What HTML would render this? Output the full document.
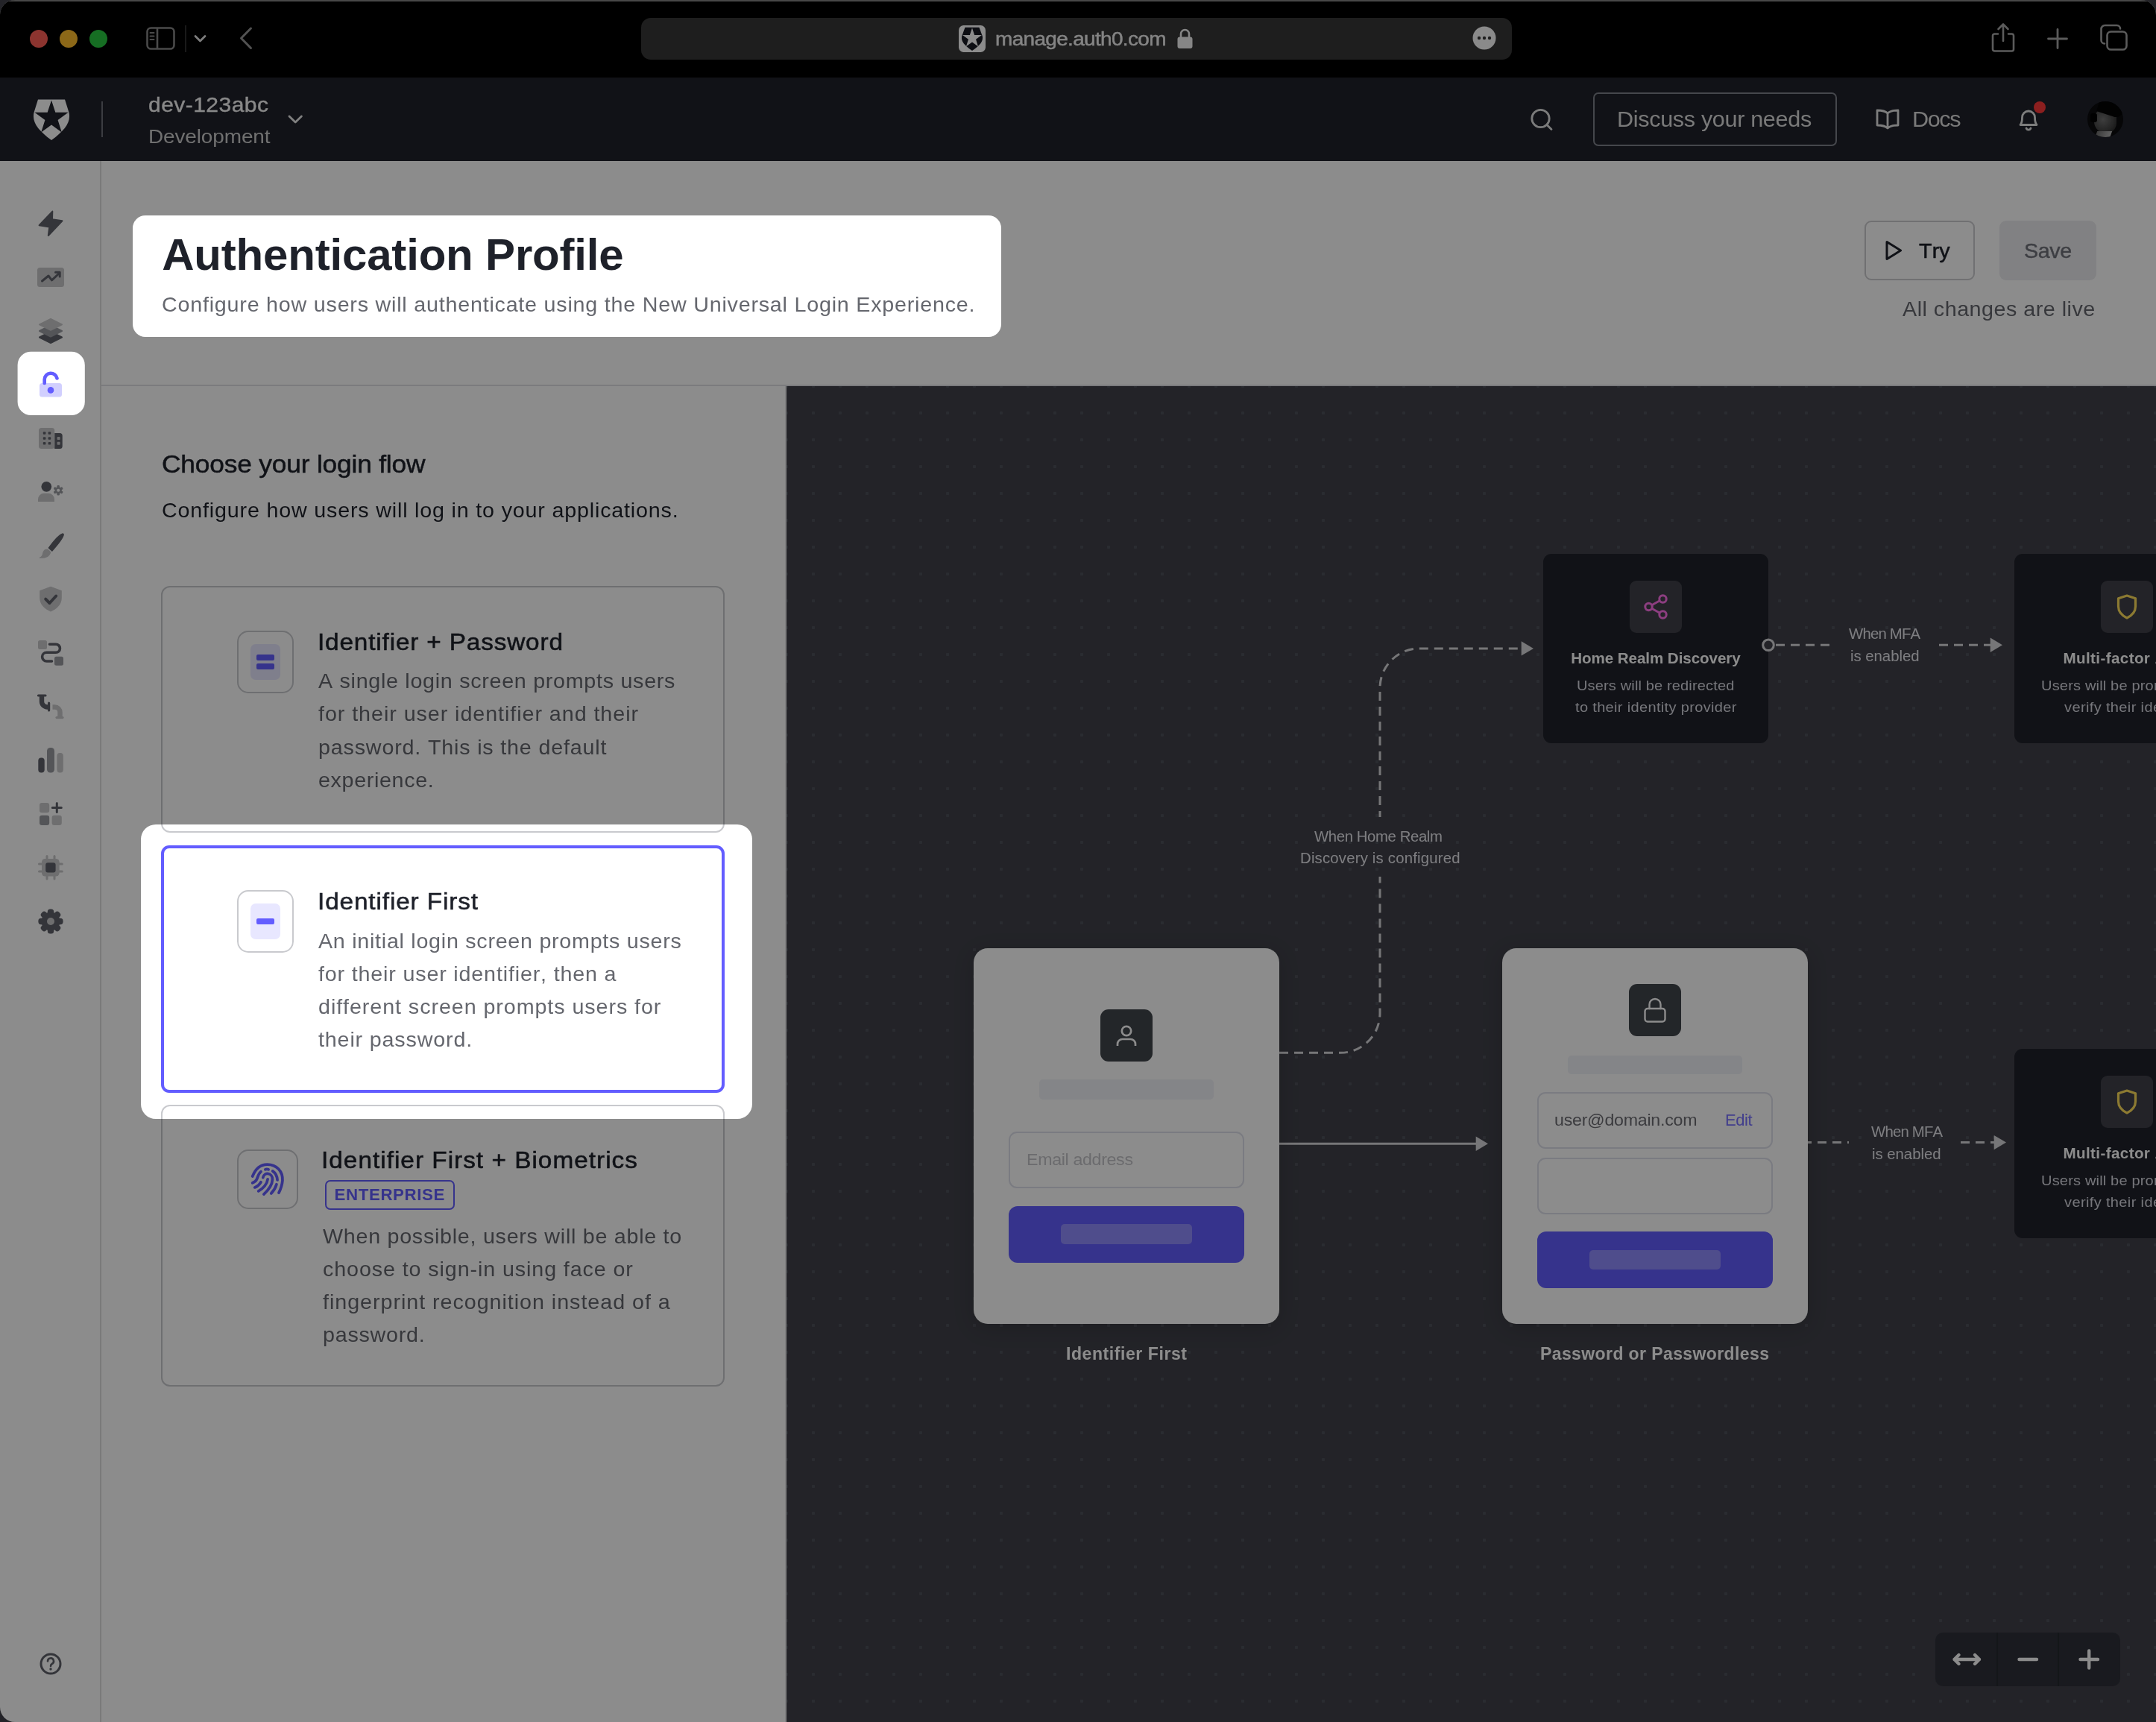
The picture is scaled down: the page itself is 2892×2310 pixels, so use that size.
<!DOCTYPE html>
<html><head><meta charset="utf-8"><title>Authentication Profile</title>
<style>
html,body{margin:0;padding:0}
body{width:2892px;height:2310px;position:relative;overflow:hidden;background:#404149;font-family:"Liberation Sans",sans-serif;font-kerning:none;-webkit-font-smoothing:antialiased}
#win{position:absolute;left:0;top:0;width:2892px;height:2310px;border-radius:20px 20px 0 20px;overflow:hidden;background:#fff;will-change:transform}
</style></head><body>
<div id="win">
<div style="position:absolute;left:0px;top:0px;width:2892px;height:104px;box-sizing:border-box;background:#000;"></div>
<div style="position:absolute;left:0px;top:0px;width:2892px;height:2px;box-sizing:border-box;background:#919191;opacity:.9;"></div>
<div style="position:absolute;left:40px;top:40px;width:24px;height:24px;box-sizing:border-box;background:#ff5f57;border-radius:12px;"></div>
<div style="position:absolute;left:80px;top:40px;width:24px;height:24px;box-sizing:border-box;background:#ffbd2d;border-radius:12px;"></div>
<div style="position:absolute;left:120px;top:40px;width:24px;height:24px;box-sizing:border-box;background:#28c840;border-radius:12px;"></div>
<svg style="position:absolute;left:194px;top:34px;" width="44" height="36" viewBox="0 0 44 36"><rect x="3.5" y="3.5" width="36" height="28" rx="5" fill="none" stroke="#878787" stroke-width="2.6"/><line x1="17" y1="3.5" x2="17" y2="31.5" stroke="#878787" stroke-width="2.6"/><g stroke="#878787" stroke-width="2" stroke-linecap="round"><line x1="7.5" y1="10" x2="12.5" y2="10"/><line x1="7.5" y1="14.5" x2="12.5" y2="14.5"/><line x1="7.5" y1="19" x2="12.5" y2="19"/></g></svg>
<div style="position:absolute;left:248px;top:34px;width:2px;height:36px;box-sizing:border-box;background:#2f2f2f;"></div>
<svg style="position:absolute;left:258px;top:44px;" width="22" height="16" viewBox="0 0 22 16"><polyline points="4,4.5 10.5,11 17,4.5" fill="none" stroke="#e3e3e3" stroke-width="2.8" stroke-linecap="round" stroke-linejoin="round"/></svg>
<svg style="position:absolute;left:316px;top:32px;" width="28" height="38" viewBox="0 0 28 38"><polyline points="20.5,6 7.5,19.3 20.5,32.5" fill="none" stroke="#959595" stroke-width="3" stroke-linecap="round" stroke-linejoin="round"/></svg>
<div style="position:absolute;left:860px;top:24px;width:1168px;height:56px;box-sizing:border-box;background:#383838;border-radius:13px;"></div>
<svg style="position:absolute;left:1286px;top:34px;" width="36" height="36" viewBox="0 0 36 36"><rect x="0" y="0" width="36" height="36" rx="6.500" fill="#ffffff"/><path d="M8.500 2.800 h19 l4.200 11.500 c1.800 7 -3.500 13 -13.700 19.700 c-10.200 -6.700 -15.500 -12.700 -13.700 -19.700 z" fill="#191b24"/><polygon points="18.00,3.60 21.12,12.91 30.93,13.00 23.04,18.84 25.99,28.20 18.00,22.50 10.01,28.20 12.96,18.84 5.07,13.00 14.88,12.91" fill="#ffffff"/></svg>
<div style="position:absolute;left:1335.00px;top:38.87px;font-size:26.5px;line-height:26.5px;color:#f0f0f0;white-space:pre;letter-spacing:-0.623px;transform:scaleX(1.055);transform-origin:0 0;-webkit-text-stroke:0.45px #f0f0f0;">manage.auth0.com</div>
<svg style="position:absolute;left:1577px;top:36px;" width="26" height="32" viewBox="0 0 26 32"><rect x="2.5" y="13.5" width="20" height="15.5" rx="3" fill="#f5f5f5"/><path d="M7 14 v-4.5 a5.5 5.5 0 0 1 11 0 v4.5" fill="none" stroke="#f5f5f5" stroke-width="2.6"/></svg>
<svg style="position:absolute;left:1975px;top:35px;" width="32" height="32" viewBox="0 0 32 32"><circle cx="16" cy="16" r="15.5" fill="#fbfbfb"/><circle cx="9" cy="16" r="2.2" fill="#383838"/><circle cx="16" cy="16" r="2.2" fill="#383838"/><circle cx="23" cy="16" r="2.2" fill="#383838"/></svg>
<svg style="position:absolute;left:2668px;top:27.5px;" width="38" height="44" viewBox="0 0 38 44"><path d="M12 17.5 h-4.5 a2.5 2.5 0 0 0 -2.5 2.5 v18 a2.5 2.5 0 0 0 2.5 2.5 h23 a2.5 2.5 0 0 0 2.5 -2.5 v-18 a2.5 2.5 0 0 0 -2.5 -2.5 h-4.500" fill="none" stroke="#a7a7a7" stroke-width="2.6" stroke-linecap="round"/><path d="M19 27 v-22 M12.500 11 l6.500 -6.500 l6.500 6.500" fill="none" stroke="#a7a7a7" stroke-width="2.6" stroke-linecap="round" stroke-linejoin="round"/></svg>
<svg style="position:absolute;left:2744px;top:36px;" width="32" height="32" viewBox="0 0 32 32"><path d="M16 3.5 v25 M3.5 16 h25" stroke="#a7a7a7" stroke-width="2.8" stroke-linecap="round"/></svg>
<svg style="position:absolute;left:2816px;top:31px;" width="40" height="38" viewBox="0 0 40 38"><rect x="10.500" y="11.500" width="26" height="24" rx="5" fill="none" stroke="#a7a7a7" stroke-width="2.6"/><path d="M7 27.500 a4.500 4.500 0 0 1 -4.500 -4.500 v-15 a5 5 0 0 1 5 -5 h16 a4.500 4.500 0 0 1 4.500 4.500" fill="none" stroke="#a7a7a7" stroke-width="2.6" stroke-linecap="round"/></svg>
<div style="position:absolute;left:0px;top:104px;width:2892px;height:112px;box-sizing:border-box;background:#1f212a;"></div>
<svg style="position:absolute;left:44px;top:133px;" width="50" height="56" viewBox="0 0 50 56"><path d="M7 0.500 h36 l5.500 17.500 c3 13 -6 24 -23.500 37 c-17.500 -13 -26.500 -24 -23.500 -37 z" fill="#ffffff"/><path d="M25 1.500 l5.300 16.300 h17.300 l-14 10.300 l5.200 16.300 l-13.800 -10 l-13.800 10 l5.200 -16.300 l-14 -10.300 h17.300 z" fill="#1f212a"/></svg>
<div style="position:absolute;left:136px;top:136px;width:2px;height:48px;box-sizing:border-box;background:#6d6f78;"></div>
<div style="position:absolute;left:198.70px;top:125.87px;font-size:28.5px;line-height:28.5px;color:#f7f7f7;white-space:pre;letter-spacing:0.407px;transform:scaleX(1.055);transform-origin:0 0;-webkit-text-stroke:0.35px #f7f7f7;">dev-123abc</div>
<div style="position:absolute;left:198.70px;top:169.87px;font-size:26.5px;line-height:26.5px;color:#cccccc;white-space:pre;letter-spacing:-0.117px;transform:scaleX(1.055);transform-origin:0 0;">Development</div>
<svg style="position:absolute;left:384px;top:150px;" width="26" height="20" viewBox="0 0 26 20"><polyline points="4,6 12.200,14 20.400,6" fill="none" stroke="#e9e9e9" stroke-width="2.8" stroke-linecap="round" stroke-linejoin="round"/></svg>
<svg style="position:absolute;left:2050px;top:143px;" width="36" height="36" viewBox="0 0 36 36"><circle cx="16.500" cy="16" r="11.700" fill="none" stroke="#e1e1e1" stroke-width="2.800"/><line x1="25" y1="24.500" x2="31" y2="30.500" stroke="#e1e1e1" stroke-width="2.800" stroke-linecap="round"/></svg>
<div style="position:absolute;left:2137px;top:124px;width:327px;height:72px;box-sizing:border-box;border-radius:7px;border:2px solid #7f818a;"></div>
<div style="position:absolute;left:2169.20px;top:146.05px;font-size:29px;line-height:29px;color:#dcdcdc;white-space:pre;letter-spacing:-0.322px;transform:scaleX(1.055);transform-origin:0 0;">Discuss your needs</div>
<svg style="position:absolute;left:2514px;top:144px;" width="36" height="32" viewBox="0 0 36 32"><path d="M18 8 c-3 -3 -8 -4 -14 -4 v20 c6 0 11 1 14 4 c3 -3 8 -4 14 -4 v-20 c-6 0 -11 1 -14 4 z M18 8 v20" fill="none" stroke="#e3e3e3" stroke-width="2.8" stroke-linejoin="round"/></svg>
<div style="position:absolute;left:2565.00px;top:146.05px;font-size:29px;line-height:29px;color:#dcdcdc;white-space:pre;letter-spacing:-1.297px;transform:scaleX(1.055);transform-origin:0 0;">Docs</div>
<svg style="position:absolute;left:2702px;top:142px;" width="38" height="36" viewBox="0 0 38 36"><path d="M8 25.500 c2.500 -3 2.500 -6 2.500 -10 a8.500 8.500 0 0 1 17 0 c0 4 0 7 2.500 10 z" fill="none" stroke="#e3e3e3" stroke-width="2.800" stroke-linejoin="round"/><path d="M16 30 a3.200 3.200 0 0 0 6 0" fill="none" stroke="#e3e3e3" stroke-width="2.800" stroke-linecap="round"/></svg>
<div style="position:absolute;left:2728px;top:136px;width:16px;height:16px;box-sizing:border-box;background:#ff3a3a;border-radius:8px;"></div>
<div style="position:absolute;left:2800px;top:136px;width:48px;height:48px;border-radius:24px;overflow:hidden;background:#0b0b0d"><div style="position:absolute;left:9px;top:9px;width:30px;height:34px;border-radius:15px 12px 14px 16px;background:radial-gradient(ellipse at 40% 45%,#717171 0%,#454545 55%,#191919 100%)"></div><div style="position:absolute;left:15px;top:-5px;width:34px;height:24px;border-radius:8px 20px 14px 2px;background:#040405;transform:rotate(18deg)"></div><div style="position:absolute;left:4px;top:16px;width:9px;height:12px;border-radius:3px;background:#000000"></div><div style="position:absolute;left:11px;top:40px;width:20px;height:12px;background:linear-gradient(90deg,#6d6d6d,#b2b2b2);transform:skewX(-20deg)"></div></div>
<div style="position:absolute;left:134px;top:216px;width:2px;height:2094px;box-sizing:border-box;background:#dedede;"></div>
<svg style="position:absolute;left:44px;top:276px;" width="48" height="48" viewBox="44 276 48 48"><path d="M70.300 283.600 L52.600 302.300 L66.300 304.600 L64.800 316 L83.500 296.300 L70 294.200 Z" fill="#60626b" stroke="#60626b" stroke-width="2" stroke-linejoin="round"/></svg>
<svg style="position:absolute;left:44px;top:348px;" width="48" height="48" viewBox="44 348 48 48"><rect x="50" y="359" width="36" height="26" rx="3.500" fill="#c8c8ca"/><polyline points="56.500,377 65,370 69.500,375.800 79,367" fill="none" stroke="#60626b" stroke-width="3" stroke-linecap="round" stroke-linejoin="round"/><polyline points="74.500,365.300 80.200,365.300 80.200,371" fill="none" stroke="#60626b" stroke-width="3" stroke-linecap="round" stroke-linejoin="round"/></svg>
<svg style="position:absolute;left:44px;top:420px;" width="48" height="48" viewBox="44 420 48 48"><path d="M68 445 L83 452.5 L68 460 L53 452.5 Z" fill="#60626b" stroke="#60626b" stroke-width="2" stroke-linejoin="round"/><path d="M68 436.5 L83 444 L68 451.5 L53 444 Z" fill="#999ba0" stroke="#999ba0" stroke-width="2" stroke-linejoin="round"/><path d="M68 427.8 L83 435.3 L68 442.8 L53 435.3 Z" fill="#c8c8ca" stroke="#c8c8ca" stroke-width="2" stroke-linejoin="round"/></svg>
<svg style="position:absolute;left:44px;top:492px;" width="48" height="48" viewBox="44 492 48 48"><rect x="53" y="514" width="30" height="18.600" rx="3.500" fill="#d1cffe"/><circle cx="68" cy="523.400" r="4.300" fill="#635dff"/><path d="M59.700 514 v-5 a8.500 8.500 0 0 1 16.800 -1.600" fill="none" stroke="#635dff" stroke-width="4.600" stroke-linecap="round"/></svg>
<svg style="position:absolute;left:44px;top:564px;" width="48" height="48" viewBox="44 564 48 48"><path d="M73.200 581 h7 a3.500 3.500 0 0 1 3.500 3.500 v14 a3.500 3.500 0 0 1 -3.500 3.500 h-7 z" fill="#60626b"/><rect x="52" y="574" width="21.200" height="28" rx="3.500" fill="#c8c8ca"/><rect x="57.8" y="579.2" width="3.600" height="3.600" rx="1" fill="#60626b"/><rect x="57.8" y="586.2" width="3.600" height="3.600" rx="1" fill="#60626b"/><rect x="57.8" y="593" width="3.600" height="3.600" rx="1" fill="#60626b"/><rect x="64.6" y="579.2" width="3.600" height="3.600" rx="1" fill="#60626b"/><rect x="64.6" y="586.2" width="3.600" height="3.600" rx="1" fill="#60626b"/><rect x="64.6" y="593" width="3.600" height="3.600" rx="1" fill="#60626b"/><rect x="76.6" y="586" width="4" height="4" rx="1" fill="#c8c8ca"/><rect x="76.6" y="592.8" width="4" height="4" rx="1" fill="#c8c8ca"/></svg>
<svg style="position:absolute;left:44px;top:636px;" width="48" height="48" viewBox="44 636 48 48"><circle cx="62.300" cy="652.800" r="6.900" fill="#60626b"/><path d="M51 673 v-3 a8 8 0 0 1 8 -8.200 h6 a8 8 0 0 1 8 8.200 v3 z" fill="#c8c8ca"/><rect x="-1.700" y="-6.700" width="3.400" height="13.400" rx="1.200" transform="translate(78.200 657.800) rotate(0)" fill="#999ba0"/><rect x="-1.700" y="-6.700" width="3.400" height="13.400" rx="1.200" transform="translate(78.200 657.800) rotate(60)" fill="#999ba0"/><rect x="-1.700" y="-6.700" width="3.400" height="13.400" rx="1.200" transform="translate(78.200 657.800) rotate(120)" fill="#999ba0"/><circle cx="78.200" cy="657.800" r="4.600" fill="#999ba0"/><circle cx="78.200" cy="657.800" r="2" fill="#ffffff"/></svg>
<svg style="position:absolute;left:44px;top:708px;" width="48" height="48" viewBox="44 708 48 48"><path d="M84.300 716 C80 717 72 726 65.500 735 L69.800 739 C77 731 84.500 722 85.200 717 Z" fill="#60626b" stroke="#60626b" stroke-width="1.500" stroke-linejoin="round"/><path d="M64 736.500 C59 736 57.500 740 57 743 C56.500 746 54 747.500 52 748.300 C58 750 67 748 68.300 740.500 Z" fill="#c8c8ca"/></svg>
<svg style="position:absolute;left:44px;top:780px;" width="48" height="48" viewBox="44 780 48 48"><path d="M68 786.800 L82.800 792.300 V802 C82.800 811 76 817 68 820.500 C60 817 53.200 811 53.200 802 V792.300 Z" fill="#c8c8ca"/><polyline points="61.200,803.700 66.500,809 75.200,799.500" fill="none" stroke="#60626b" stroke-width="4" stroke-linecap="round" stroke-linejoin="round"/></svg>
<svg style="position:absolute;left:44px;top:852px;" width="48" height="48" viewBox="44 852 48 48"><rect x="51" y="859" width="12" height="12" rx="2.500" fill="#c8c8ca"/><rect x="73" y="880.800" width="12" height="12" rx="2.500" fill="#999ba0"/><path d="M66.500 864.300 H75 a5.450 5.450 0 0 1 0 10.900 H62.500 a5.900 5.900 0 0 0 0 11.800 H69.500" fill="none" stroke="#60626b" stroke-width="3.600" stroke-linecap="round"/></svg>
<svg style="position:absolute;left:44px;top:924px;" width="48" height="48" viewBox="44 924 48 48"><path d="M56 933.500 v7.500 a7.500 7.500 0 0 0 7.500 7.500 h2" fill="none" stroke="#60626b" stroke-width="6.400"/><path d="M51.500 933 h9.500 M65.600 943 v10" stroke="#60626b" stroke-width="3.200" stroke-linecap="round"/><path d="M70.500 948.500 h3 a7 7 0 0 1 7 7 v6.500" fill="none" stroke="#c8c8ca" stroke-width="6.400"/><path d="M76 962.600 h8" stroke="#c8c8ca" stroke-width="3.200" stroke-linecap="round"/></svg>
<svg style="position:absolute;left:44px;top:996px;" width="48" height="48" viewBox="44 996 48 48"><rect x="51.300" y="1016.600" width="8.400" height="20" rx="4" fill="#60626b"/><rect x="63" y="1003" width="10" height="33.600" rx="4.500" fill="#999ba0"/><rect x="76.400" y="1010" width="8.400" height="26.600" rx="4" fill="#c8c8ca"/></svg>
<svg style="position:absolute;left:44px;top:1068px;" width="48" height="48" viewBox="44 1068 48 48"><rect x="53" y="1077" width="13.200" height="13.200" rx="3.200" fill="#c8c8ca"/><rect x="53" y="1093.800" width="13.200" height="13.200" rx="3.200" fill="#999ba0"/><rect x="69.600" y="1093.800" width="13.200" height="13.200" rx="3.200" fill="#c8c8ca"/><path d="M76.300 1077.600 v12 M70.300 1083.600 h12" stroke="#60626b" stroke-width="3" stroke-linecap="round"/></svg>
<svg style="position:absolute;left:44px;top:1140px;" width="48" height="48" viewBox="44 1140 48 48"><path d="M63 1148.500 v30.500" stroke="#c8c8ca" stroke-width="3" stroke-linecap="round"/><path d="M73 1148.500 v30.500" stroke="#c8c8ca" stroke-width="3" stroke-linecap="round"/><path d="M52.500 1159 h30.800" stroke="#c8c8ca" stroke-width="3" stroke-linecap="round"/><path d="M52.500 1169 h30.800" stroke="#c8c8ca" stroke-width="3" stroke-linecap="round"/><rect x="56" y="1152" width="23.600" height="23.600" rx="4.500" fill="#c8c8ca"/><rect x="61.200" y="1157.200" width="13.400" height="13.400" rx="3" fill="#60626b"/></svg>
<svg style="position:absolute;left:44px;top:1212px;" width="48" height="48" viewBox="44 1212 48 48"><rect x="-4.200" y="-16.600" width="8.400" height="33.200" rx="3.600" transform="translate(68 1236) rotate(0)" fill="#60626b"/><rect x="-4.200" y="-16.600" width="8.400" height="33.200" rx="3.600" transform="translate(68 1236) rotate(45)" fill="#60626b"/><rect x="-4.200" y="-16.600" width="8.400" height="33.200" rx="3.600" transform="translate(68 1236) rotate(90)" fill="#60626b"/><rect x="-4.200" y="-16.600" width="8.400" height="33.200" rx="3.600" transform="translate(68 1236) rotate(135)" fill="#60626b"/><circle cx="68" cy="1236" r="12.500" fill="#60626b"/><circle cx="68" cy="1236" r="5" fill="#c8c8ca"/></svg>
<svg style="position:absolute;left:44px;top:2208px;" width="48" height="48" viewBox="44 2208 48 48"><circle cx="68" cy="2232" r="13" fill="none" stroke="#60626b" stroke-width="3"/><path d="M64 2228.500 a4 4 0 1 1 5.800 3.500 c-1.300 0.700 -1.800 1.500 -1.800 3" fill="none" stroke="#60626b" stroke-width="2.600" stroke-linecap="round"/><circle cx="68" cy="2239" r="1.700" fill="#60626b"/></svg>
<div style="position:absolute;left:136px;top:516px;width:2756px;height:2px;box-sizing:border-box;background:#e1e1e5;"></div>
<div style="position:absolute;left:217.20px;top:311.51px;font-size:60px;line-height:60px;color:#1e212a;white-space:pre;font-weight:700;letter-spacing:-0.184px;">Authentication Profile</div>
<div style="position:absolute;left:216.70px;top:394.68px;font-size:27.2px;line-height:27.2px;color:#65676e;white-space:pre;letter-spacing:0.736px;transform:scaleX(1.055);transform-origin:0 0;">Configure how users will authenticate using the New Universal Login Experience.</div>
<div style="position:absolute;left:2501px;top:296px;width:148px;height:80px;box-sizing:border-box;border-radius:9px;border:2px solid #cccccf;"></div>
<svg style="position:absolute;left:2524px;top:318px;" width="34" height="36" viewBox="0 0 34 36"><path d="M7 6.500 L25.500 18 L7 29.500 Z" fill="none" stroke="#1e212a" stroke-width="3" stroke-linejoin="round"/></svg>
<div style="position:absolute;left:2573.90px;top:322.98px;font-size:27.2px;line-height:27.2px;color:#1e212a;white-space:pre;letter-spacing:0.126px;transform:scaleX(1.055);transform-origin:0 0;-webkit-text-stroke:0.5px #1e212a;">Try</div>
<div style="position:absolute;left:2682px;top:296px;width:130px;height:80px;box-sizing:border-box;background:#ececee;border-radius:9px;"></div>
<div style="position:absolute;left:2714.60px;top:323.18px;font-size:27.2px;line-height:27.2px;color:#6f717a;white-space:pre;letter-spacing:-0.382px;transform:scaleX(1.055);transform-origin:0 0;-webkit-text-stroke:0.4px #6f717a;">Save</div>
<div style="position:absolute;left:2552.10px;top:401.28px;font-size:27.2px;line-height:27.2px;color:#65676e;white-space:pre;letter-spacing:0.472px;transform:scaleX(1.055);transform-origin:0 0;">All changes are live</div>
<div style="position:absolute;left:1053px;top:518px;width:2px;height:1792px;box-sizing:border-box;background:#e5e5e7;"></div>
<div style="position:absolute;left:217.30px;top:606.44px;font-size:33.5px;line-height:33.5px;color:#1e212a;white-space:pre;letter-spacing:-0.183px;transform:scaleX(1.055);transform-origin:0 0;-webkit-text-stroke:0.5px #1e212a;">Choose your login flow</div>
<div style="position:absolute;left:216.70px;top:671.38px;font-size:27.2px;line-height:27.2px;color:#1e212a;white-space:pre;letter-spacing:0.769px;transform:scaleX(1.055);transform-origin:0 0;">Configure how users will log in to your applications.</div>
<div style="position:absolute;left:216px;top:786px;width:756px;height:331px;box-sizing:border-box;border-radius:12px;border:2px solid #c9cace;"></div>
<div style="position:absolute;left:318px;top:846px;width:76px;height:84px;box-sizing:border-box;border-radius:15px;border:2px solid #c9cace;"></div>
<div style="position:absolute;left:336px;top:864px;width:40px;height:48px;box-sizing:border-box;background:#e8e7ff;border-radius:7px;"></div>
<div style="position:absolute;left:344px;top:878px;width:24px;height:8px;box-sizing:border-box;background:#635dff;border-radius:2px;"></div>
<div style="position:absolute;left:344px;top:890px;width:24px;height:8px;box-sizing:border-box;background:#635dff;border-radius:2px;"></div>
<div style="position:absolute;left:426.00px;top:845.55px;font-size:31.6px;line-height:31.6px;color:#1e212a;white-space:pre;letter-spacing:0.794px;transform:scaleX(1.055);transform-origin:0 0;-webkit-text-stroke:0.55px #1e212a;">Identifier + Password</div>
<div style="position:absolute;left:427.00px;top:900.38px;font-size:27.2px;line-height:27.2px;color:#65676e;white-space:pre;letter-spacing:0.670px;transform:scaleX(1.055);transform-origin:0 0;">A single login screen prompts users</div>
<div style="position:absolute;left:427.00px;top:944.48px;font-size:27.2px;line-height:27.2px;color:#65676e;white-space:pre;letter-spacing:0.893px;transform:scaleX(1.055);transform-origin:0 0;">for their user identifier and their</div>
<div style="position:absolute;left:427.00px;top:988.58px;font-size:27.2px;line-height:27.2px;color:#65676e;white-space:pre;letter-spacing:0.776px;transform:scaleX(1.055);transform-origin:0 0;">password. This is the default</div>
<div style="position:absolute;left:427.00px;top:1032.68px;font-size:27.2px;line-height:27.2px;color:#65676e;white-space:pre;letter-spacing:0.610px;transform:scaleX(1.055);transform-origin:0 0;">experience.</div>
<div style="position:absolute;left:216px;top:1134px;width:756px;height:332px;box-sizing:border-box;background:#fff;border-radius:11px;border:4px solid #635dff;"></div>
<div style="position:absolute;left:318px;top:1194px;width:76px;height:84px;box-sizing:border-box;border-radius:15px;border:2px solid #c9cace;"></div>
<div style="position:absolute;left:336px;top:1212px;width:40px;height:48px;box-sizing:border-box;background:#e8e7ff;border-radius:7px;"></div>
<div style="position:absolute;left:344px;top:1232px;width:24px;height:8px;box-sizing:border-box;background:#635dff;border-radius:2px;"></div>
<div style="position:absolute;left:426.00px;top:1193.55px;font-size:31.6px;line-height:31.6px;color:#1e212a;white-space:pre;letter-spacing:0.825px;transform:scaleX(1.055);transform-origin:0 0;-webkit-text-stroke:0.55px #1e212a;">Identifier First</div>
<div style="position:absolute;left:427.00px;top:1248.98px;font-size:27.2px;line-height:27.2px;color:#65676e;white-space:pre;letter-spacing:0.686px;transform:scaleX(1.055);transform-origin:0 0;">An initial login screen prompts users</div>
<div style="position:absolute;left:427.00px;top:1293.08px;font-size:27.2px;line-height:27.2px;color:#65676e;white-space:pre;letter-spacing:0.783px;transform:scaleX(1.055);transform-origin:0 0;">for their user identifier, then a</div>
<div style="position:absolute;left:427.00px;top:1337.18px;font-size:27.2px;line-height:27.2px;color:#65676e;white-space:pre;letter-spacing:0.878px;transform:scaleX(1.055);transform-origin:0 0;">different screen prompts users for</div>
<div style="position:absolute;left:427.00px;top:1381.28px;font-size:27.2px;line-height:27.2px;color:#65676e;white-space:pre;letter-spacing:0.793px;transform:scaleX(1.055);transform-origin:0 0;">their password.</div>
<div style="position:absolute;left:216px;top:1482px;width:756px;height:378px;box-sizing:border-box;border-radius:12px;border:2px solid #c9cace;"></div>
<div style="position:absolute;left:318px;top:1542px;width:82px;height:80px;box-sizing:border-box;border-radius:15px;border:2px solid #c9cace;"></div>
<svg style="position:absolute;left:310px;top:1535px;" width="100" height="95" viewBox="0 0 1813 1722"><g fill="none" stroke="#635dff" stroke-width="68" stroke-linecap="round"><path d="M520 780 C590 600 720 490 880 490 C1110 490 1260 660 1250 880 C1240 1000 1200 1100 1160 1180"/><path d="M832 612 Q870 598 908 612"/><path d="M725 665 C660 720 650 800 620 860 C600 900 560 925 520 940"/><path d="M1010 650 C1080 700 1120 780 1125 870"/><path d="M775 810 C790 740 850 712 890 715 C960 720 1010 780 1005 860 C1000 980 900 1120 795 1215"/><path d="M890 850 C880 960 780 1080 665 1140"/><path d="M725 920 C690 980 640 1025 575 1050"/><path d="M1105 975 C1080 1060 1030 1140 975 1195"/></g></svg>
<div style="position:absolute;left:430.80px;top:1541.25px;font-size:31.6px;line-height:31.6px;color:#1e212a;white-space:pre;letter-spacing:0.963px;transform:scaleX(1.055);transform-origin:0 0;-webkit-text-stroke:0.55px #1e212a;">Identifier First + Biometrics</div>
<div style="position:absolute;left:436px;top:1583px;width:174px;height:40px;box-sizing:border-box;border-radius:7px;border:2px solid #635dff;"></div>
<div style="position:absolute;left:448.60px;top:1591.72px;font-size:22.3px;line-height:22.3px;color:#635dff;white-space:pre;font-weight:700;letter-spacing:0.588px;">ENTERPRISE</div>
<div style="position:absolute;left:432.50px;top:1644.68px;font-size:27.2px;line-height:27.2px;color:#65676e;white-space:pre;letter-spacing:0.685px;transform:scaleX(1.055);transform-origin:0 0;">When possible, users will be able to</div>
<div style="position:absolute;left:432.50px;top:1688.78px;font-size:27.2px;line-height:27.2px;color:#65676e;white-space:pre;letter-spacing:0.849px;transform:scaleX(1.055);transform-origin:0 0;">choose to sign-in using face or</div>
<div style="position:absolute;left:432.50px;top:1732.88px;font-size:27.2px;line-height:27.2px;color:#65676e;white-space:pre;letter-spacing:0.910px;transform:scaleX(1.055);transform-origin:0 0;">fingerprint recognition instead of a</div>
<div style="position:absolute;left:432.50px;top:1776.98px;font-size:27.2px;line-height:27.2px;color:#65676e;white-space:pre;letter-spacing:0.700px;transform:scaleX(1.055);transform-origin:0 0;">password.</div>
<svg style="position:absolute;left:1055px;top:518px" width="1837" height="1792"><defs><pattern id="dots" x="34" y="34" width="36" height="36" patternUnits="userSpaceOnUse"><rect x="0" y="0" width="4" height="4" rx="0.800" fill="#4e5059"/></pattern></defs><rect width="1838" height="1792" fill="#404149"/><rect width="1838" height="1792" fill="url(#dots)"/></svg>
<svg style="position:absolute;left:0;top:0" width="2892" height="2310"><g fill="none" stroke="#d7d7da" stroke-width="3"><path d="M1716 1412.300 H1798 a53 53 0 0 0 53 -53 V1176" stroke-dasharray="12 8"/><path d="M1851 1096 V922.900 a53 53 0 0 1 53 -53 H2042" stroke-dasharray="12 8" stroke-dashoffset="4"/><path d="M1716 1534.300 H1982"/><path d="M2382 865.300 H2456" stroke-dasharray="12 8"/><path d="M2601 865.300 H2672" stroke-dasharray="12 8"/><path d="M2424 1532.600 H2480" stroke-dasharray="12 8" stroke-dashoffset="6"/><path d="M2630 1532.600 H2677" stroke-dasharray="12 8"/></g><path d="M2057 869.9 l-16.300 -9.700 v19.400 z" fill="#d7d7da"/><path d="M1996 1534.3 l-16.300 -9.700 v19.400 z" fill="#d7d7da"/><path d="M2686 865.3 l-16.300 -9.700 v19.400 z" fill="#d7d7da"/><path d="M2691 1532.6 l-16.300 -9.700 v19.400 z" fill="#d7d7da"/></svg>
<div style="position:absolute;left:1762.95px;top:1112.96px;font-size:19.3px;line-height:19.3px;color:#e5e5eb;white-space:pre;letter-spacing:-0.376px;transform:scaleX(1.055);transform-origin:0 0;">When Home Realm</div>
<div style="position:absolute;left:1743.85px;top:1142.16px;font-size:19.3px;line-height:19.3px;color:#e5e5eb;white-space:pre;letter-spacing:0.181px;transform:scaleX(1.055);transform-origin:0 0;">Discovery is configured</div>
<div style="position:absolute;left:2479.90px;top:841.26px;font-size:19.3px;line-height:19.3px;color:#e5e5eb;white-space:pre;letter-spacing:-0.762px;transform:scaleX(1.055);transform-origin:0 0;">When MFA</div>
<div style="position:absolute;left:2481.70px;top:870.56px;font-size:19.3px;line-height:19.3px;color:#e5e5eb;white-space:pre;letter-spacing:-0.024px;transform:scaleX(1.055);transform-origin:0 0;">is enabled</div>
<div style="position:absolute;left:2509.50px;top:1509.26px;font-size:19.3px;line-height:19.3px;color:#e5e5eb;white-space:pre;letter-spacing:-0.762px;transform:scaleX(1.055);transform-origin:0 0;">When MFA</div>
<div style="position:absolute;left:2511.30px;top:1538.76px;font-size:19.3px;line-height:19.3px;color:#e5e5eb;white-space:pre;letter-spacing:-0.024px;transform:scaleX(1.055);transform-origin:0 0;">is enabled</div>
<div style="position:absolute;left:2070px;top:743px;width:302px;height:254px;box-sizing:border-box;background:#1f212a;border-radius:11px;"></div>
<div style="position:absolute;left:2186px;top:778.5px;width:70px;height:70px;box-sizing:border-box;background:#404149;border-radius:9px;"></div>
<svg style="position:absolute;left:2186px;top:778.5px;" width="70" height="70" viewBox="0 0 70 70"><g fill="none" stroke="#ff71e9" stroke-width="3"><circle cx="44.500" cy="24.500" r="4.700"/><circle cx="25.500" cy="35" r="4.700"/><circle cx="44.500" cy="45.500" r="4.700"/><path d="M29.600 32.700 L40.400 26.800 M29.600 37.300 L40.400 43.200"/></g></svg>
<div style="position:absolute;left:2107.20px;top:873.26px;font-size:20.6px;line-height:20.6px;color:#ffffff;white-space:pre;font-weight:700;letter-spacing:-0.073px;">Home Realm Discovery</div>
<div style="position:absolute;left:2115.35px;top:909.72px;font-size:19px;line-height:19px;color:#d7d8e0;white-space:pre;letter-spacing:0.123px;transform:scaleX(1.055);transform-origin:0 0;">Users will be redirected</div>
<div style="position:absolute;left:2112.80px;top:938.92px;font-size:19px;line-height:19px;color:#d7d8e0;white-space:pre;letter-spacing:0.305px;transform:scaleX(1.055);transform-origin:0 0;">to their identity provider</div>
<div style="position:absolute;left:2702px;top:743px;width:302px;height:254px;box-sizing:border-box;background:#1f212a;border-radius:11px;"></div>
<div style="position:absolute;left:2818px;top:778.5px;width:70px;height:70px;box-sizing:border-box;background:#404149;border-radius:9px;"></div>
<svg style="position:absolute;left:2818px;top:778.5px;" width="70" height="70" viewBox="0 0 70 70"><path d="M35 20 L46.500 23.800 V34.500 C46.500 42.500 41 47 35 50 C29 47 23.500 42.500 23.500 34.500 V23.800 Z" fill="none" stroke="#ffde5b" stroke-width="3.200" stroke-linejoin="round"/></svg>
<div style="position:absolute;left:2767.50px;top:873.26px;font-size:20.6px;line-height:20.6px;color:#ffffff;white-space:pre;font-weight:700;letter-spacing:0.389px;">Multi-factor Auth</div>
<div style="position:absolute;left:2738.00px;top:909.72px;font-size:19px;line-height:19px;color:#d7d8e0;white-space:pre;letter-spacing:0.152px;transform:scaleX(1.055);transform-origin:0 0;">Users will be prompted to</div>
<div style="position:absolute;left:2768.70px;top:938.92px;font-size:19px;line-height:19px;color:#d7d8e0;white-space:pre;letter-spacing:0.335px;transform:scaleX(1.055);transform-origin:0 0;">verify their identity</div>
<div style="position:absolute;left:2702px;top:1407px;width:302px;height:254px;box-sizing:border-box;background:#1f212a;border-radius:11px;"></div>
<div style="position:absolute;left:2818px;top:1442.5px;width:70px;height:70px;box-sizing:border-box;background:#404149;border-radius:9px;"></div>
<svg style="position:absolute;left:2818px;top:1442.5px;" width="70" height="70" viewBox="0 0 70 70"><path d="M35 20 L46.500 23.800 V34.500 C46.500 42.500 41 47 35 50 C29 47 23.500 42.500 23.500 34.500 V23.800 Z" fill="none" stroke="#ffde5b" stroke-width="3.200" stroke-linejoin="round"/></svg>
<div style="position:absolute;left:2767.50px;top:1537.26px;font-size:20.6px;line-height:20.6px;color:#ffffff;white-space:pre;font-weight:700;letter-spacing:0.389px;">Multi-factor Auth</div>
<div style="position:absolute;left:2738.00px;top:1573.72px;font-size:19px;line-height:19px;color:#d7d8e0;white-space:pre;letter-spacing:0.152px;transform:scaleX(1.055);transform-origin:0 0;">Users will be prompted to</div>
<div style="position:absolute;left:2768.70px;top:1602.92px;font-size:19px;line-height:19px;color:#d7d8e0;white-space:pre;letter-spacing:0.335px;transform:scaleX(1.055);transform-origin:0 0;">verify their identity</div>
<svg style="position:absolute;left:2360px;top:853px;" width="24" height="24" viewBox="0 0 24 24"><circle cx="12" cy="12.300" r="7.300" fill="#404149" stroke="#d7d7da" stroke-width="3"/></svg>
<div style="position:absolute;left:1306px;top:1272px;width:410px;height:504px;box-sizing:border-box;background:#fff;border-radius:19px;box-shadow:0 6px 28px rgba(0,0,0,0.16);"></div>
<div style="position:absolute;left:1476px;top:1354px;width:70px;height:70px;box-sizing:border-box;background:#40454b;border-radius:11px;"></div>
<svg style="position:absolute;left:1476px;top:1354px;" width="70" height="70" viewBox="0 0 70 70"><g fill="none" stroke="#ffffff" stroke-width="2.700" stroke-linecap="butt"><circle cx="35" cy="29" r="6.200"/><path d="M23 49 v-2.500 a6.500 6.500 0 0 1 6.500 -6.500 h11 a6.500 6.500 0 0 1 6.500 6.500 v2.500"/></g></svg>
<div style="position:absolute;left:1394px;top:1448px;width:234px;height:26.5px;box-sizing:border-box;background:#f0f2f7;border-radius:5px;"></div>
<div style="position:absolute;left:1353px;top:1518px;width:316px;height:76px;box-sizing:border-box;border-radius:11px;border:2px solid #dee0eb;"></div>
<div style="position:absolute;left:1377.00px;top:1545.38px;font-size:22px;line-height:22px;color:#c4c4c8;white-space:pre;letter-spacing:-0.321px;transform:scaleX(1.055);transform-origin:0 0;">Email address</div>
<div style="position:absolute;left:1353px;top:1617.5px;width:316px;height:76px;box-sizing:border-box;background:#635dff;border-radius:12px;"></div>
<div style="position:absolute;left:1423px;top:1642px;width:176px;height:27px;box-sizing:border-box;background:#918cff;border-radius:5px;"></div>
<div style="position:absolute;left:1430.00px;top:1804.83px;font-size:23px;line-height:23px;color:#ffffff;white-space:pre;font-weight:700;letter-spacing:0.576px;">Identifier First</div>
<div style="position:absolute;left:2015px;top:1272px;width:410px;height:504px;box-sizing:border-box;background:#fff;border-radius:19px;box-shadow:0 6px 28px rgba(0,0,0,0.16);"></div>
<div style="position:absolute;left:2184.5px;top:1320px;width:70px;height:70px;box-sizing:border-box;background:#40454b;border-radius:11px;"></div>
<svg style="position:absolute;left:2184.5px;top:1320px;" width="70" height="70" viewBox="0 0 70 70"><g fill="none" stroke="#ffffff" stroke-width="2.400" stroke-linecap="round" stroke-linejoin="round"><rect x="21.500" y="33" width="27" height="17.500" rx="3.500"/><path d="M27.500 33 v-5.500 a7.500 7.500 0 0 1 15 0 v5.500"/></g></svg>
<div style="position:absolute;left:2102.5px;top:1416px;width:234px;height:25px;box-sizing:border-box;background:#f0f2f7;border-radius:5px;"></div>
<div style="position:absolute;left:2061.5px;top:1464.5px;width:316px;height:76px;box-sizing:border-box;border-radius:11px;border:2px solid #dee0eb;"></div>
<div style="position:absolute;left:2085.40px;top:1492.18px;font-size:22px;line-height:22px;color:#6d6d74;white-space:pre;letter-spacing:-0.246px;transform:scaleX(1.055);transform-origin:0 0;">user@domain.com</div>
<div style="position:absolute;left:2314.00px;top:1492.18px;font-size:22px;line-height:22px;color:#7871ff;white-space:pre;letter-spacing:-0.470px;">Edit</div>
<div style="position:absolute;left:2061.5px;top:1552.5px;width:316px;height:76px;box-sizing:border-box;border-radius:11px;border:2px solid #dee0eb;"></div>
<div style="position:absolute;left:2061.5px;top:1652px;width:316px;height:76px;box-sizing:border-box;background:#635dff;border-radius:12px;"></div>
<div style="position:absolute;left:2131.5px;top:1676.5px;width:176px;height:26.5px;box-sizing:border-box;background:#918cff;border-radius:5px;"></div>
<div style="position:absolute;left:2066.00px;top:1804.83px;font-size:23px;line-height:23px;color:#ffffff;white-space:pre;font-weight:700;letter-spacing:0.397px;">Password or Passwordless</div>
<div style="position:absolute;left:2596px;top:2190px;width:248px;height:72px;box-sizing:border-box;background:#2f313a;border-radius:10px;"></div>
<div style="position:absolute;left:2677.5px;top:2190px;width:2px;height:72px;box-sizing:border-box;background:#26282f;"></div>
<div style="position:absolute;left:2759.5px;top:2190px;width:2px;height:72px;box-sizing:border-box;background:#26282f;"></div>
<svg style="position:absolute;left:2596px;top:2190px;" width="248" height="72" viewBox="0 0 248 72"><g fill="none" stroke="#ffffff" stroke-width="4.400" stroke-linecap="round" stroke-linejoin="round"><path d="M25.500 36 H59 M31.500 30 L25.500 36 L31.500 42 M53 30 L59 36 L53 42"/><path d="M112.500 36 H136"/><path d="M194.500 36 H218 M206.200 24.500 V47.500"/></g></svg>
</div>
<svg style="position:absolute;left:0;top:0" width="2892" height="2310"><path fill-rule="evenodd" fill="rgba(0,0,0,0.45)" d="M0 0 H2892 V2310 H0 Z M41.6 471.7 h54.2 a18 18 0 0 1 18 18 v49.4 a18 18 0 0 1 -18 18 h-54.2 a18 18 0 0 1 -18 -18 v-49.4 a18 18 0 0 1 18 -18 z M195 289 h1131 a17 17 0 0 1 17 17 v129 a17 17 0 0 1 -17 17 h-1131 a17 17 0 0 1 -17 -17 v-129 a17 17 0 0 1 17 -17 z M209 1106 h780 a20 20 0 0 1 20 20 v355 a20 20 0 0 1 -20 20 h-780 a20 20 0 0 1 -20 -20 v-355 a20 20 0 0 1 20 -20 z"/></svg>
</body></html>
